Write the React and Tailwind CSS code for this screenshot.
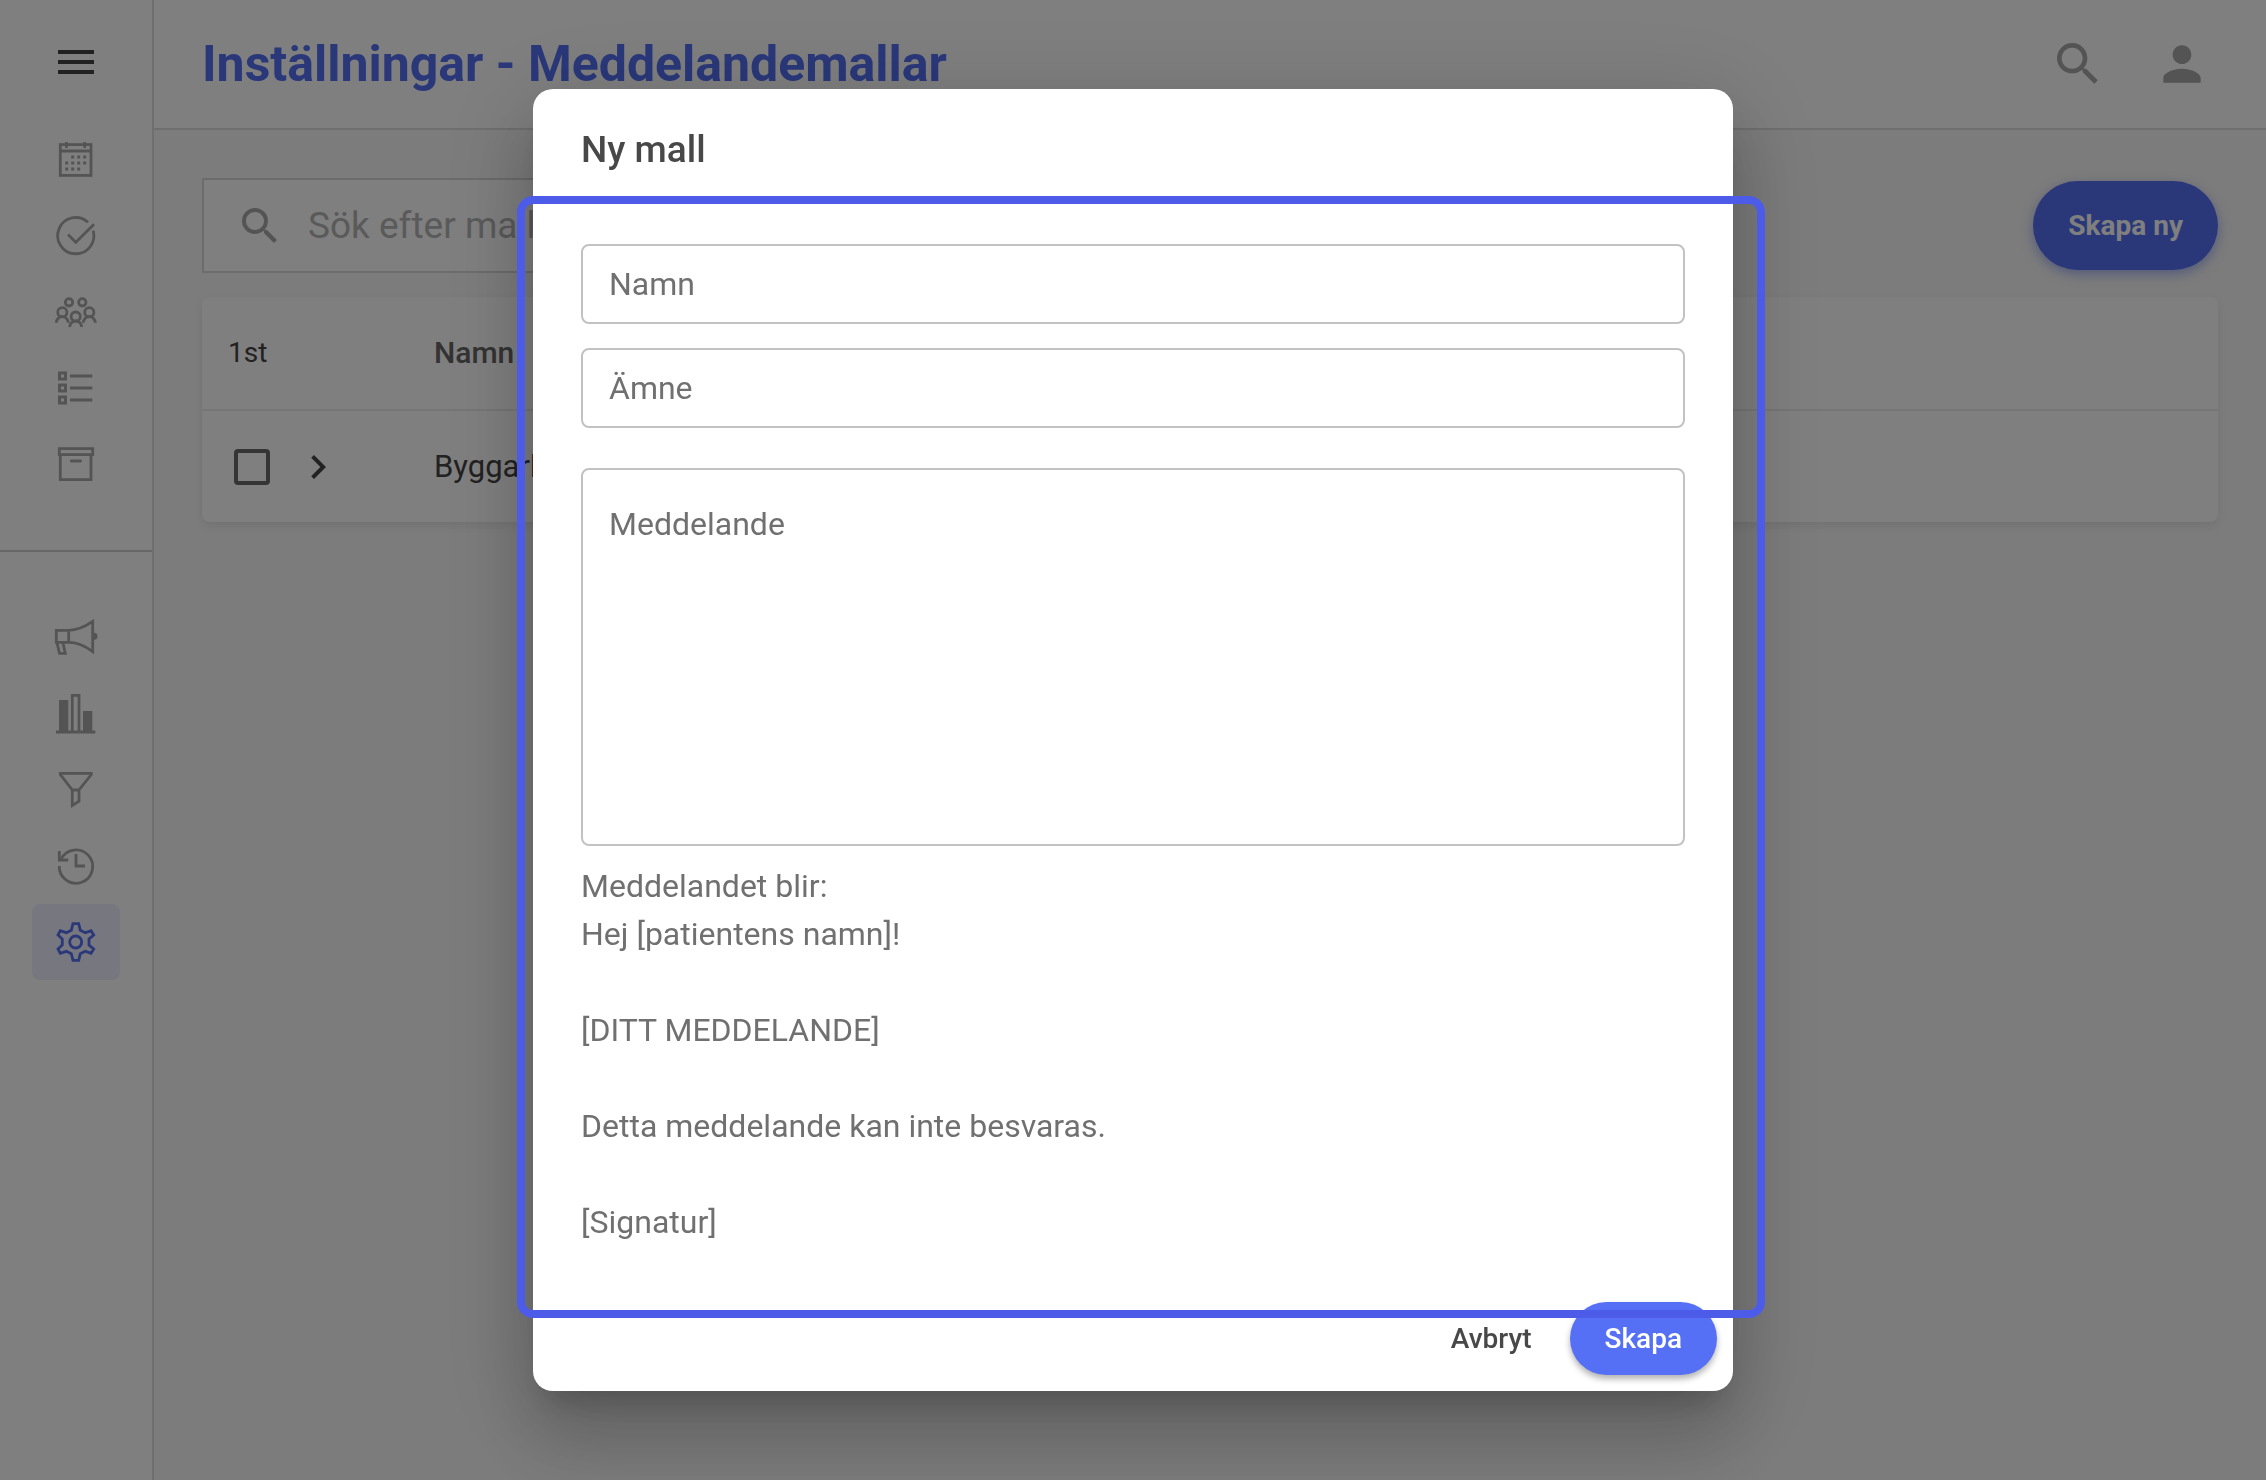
import { MdChevronRight, MdMenu, MdPerson, MdSearch } from 'react-icons/md';

function Icon({ children }) {
  return (
    <svg
      viewBox="0 0 48 48"
      className="size-12"
      fill="none"
      stroke="currentColor"
      strokeWidth="2.8"
      aria-hidden="true"
    >
      {children}
    </svg>
  );
}

const calendarDots = [
  [20.7, 21], [26.7, 21], [32.7, 21],
  [14.7, 27], [20.7, 27], [26.7, 27], [32.7, 27],
  [14.7, 33], [20.7, 33], [26.7, 33],
];

function CalendarIcon() {
  return (
    <Icon>
      <rect x="8.3" y="8.6" width="30.7" height="30.8" />
      <path d="M8 15H39M14.5 6V12M32.7 6V12" />
      {calendarDots.map(([x, y]) => (
        <rect key={`${x}-${y}`} x={x - 1.5} y={y - 1.5} width="3" height="3" fill="currentColor" stroke="none" />
      ))}
    </Icon>
  );
}

function TaskIcon() {
  return (
    <Icon>
      <path d="M36 10.3A18.1 18.1 0 1 0 41.2 18.7" />
      <path d="M16 22.4L23.8 30.2L42 12.2" />
    </Icon>
  );
}

function PeopleIcon() {
  return (
    <Icon>
      <circle cx="17" cy="14.3" r="3.7" />
      <circle cx="30.3" cy="14.3" r="3.7" />
      <circle cx="10.3" cy="24.3" r="4.6" />
      <circle cx="37.3" cy="24.3" r="4.6" />
      <circle cx="23.7" cy="28.6" r="4.6" />
      <path d="M4.3 34.7a6 6 0 0 1 12 0M31.3 34.7a6 6 0 0 1 12 0M17.7 39a6 6 0 0 1 12 0" />
    </Icon>
  );
}

function ListIcon() {
  return (
    <Icon>
      <path d="M7.5 9h6v6h-6zM7.5 21h6v6h-6zM7.5 33h6v6h-6z" strokeWidth="3" />
      <path d="M18 12H40.3M18 24H40.3M18 36H40.3" />
    </Icon>
  );
}

function ArchiveIcon() {
  return (
    <Icon>
      <path d="M7.3 8.6H40.7V14.7H7.3zM8.3 15V39.7H39V15" />
      <path d="M19.3 21H28.6" strokeLinecap="round" />
    </Icon>
  );
}

function MegaphoneIcon() {
  return (
    <Icon>
      <path d="M16.7 16.3H4.3V28.3H16.7zM16.7 16.3C26 16.3 34 12 40.7 7.4V37.6C34 32.4 26 28.3 16.7 28.3" />
      <path d="M5 29L7.5 39.3H13.3L11 29" />
      <path d="M42 18.8a3.4 3.4 0 0 1 0 7z" fill="currentColor" stroke="none" />
    </Icon>
  );
}

function ChartIcon() {
  return (
    <Icon>
      <path d="M7 10H16.3V41H7zM31 21H40.3V41H31z" fill="currentColor" stroke="none" />
      <path d="M20.3 42V5.3H27V42" />
      <path d="M4 42H43.3" strokeWidth="3" />
    </Icon>
  );
}

function FilterIcon() {
  return (
    <Icon>
      <path d="M8.3 7.3H39.3V8.6L27 24V35.3L20.3 39.4V24L8.3 8.6ZM20.3 24H27" />
    </Icon>
  );
}

function HistoryIcon() {
  return (
    <Icon>
      <path d="M7.3 24A16.7 16.7 0 1 0 9 17.2" />
      <path d="M7.3 9V18H16.3M24 12V24H33" />
    </Icon>
  );
}

function GearIcon() {
  return (
    <Icon>
      <circle cx="23.7" cy="24" r="6" />
      <path d="M21 5.7H26.7L28.3 12.3L33.3 14.7L39 12.7L41.7 17L37 21V27L41.7 31L39 35.3L33.3 33.3L28.3 35.7L26.7 42.3H21L19.3 35.7L14.3 33.3L8.3 35.3L6 31L10.3 27V21L6 17L8.3 12.7L14.3 14.7L19.3 12.3Z" />
    </Icon>
  );
}

const primaryNav = [
  { label: 'Kalender', icon: CalendarIcon },
  { label: 'Uppgifter', icon: TaskIcon },
  { label: 'Patienter', icon: PeopleIcon },
  { label: 'Listor', icon: ListIcon },
  { label: 'Arkiv', icon: ArchiveIcon },
];

const secondaryNav = [
  { label: 'Utskick', icon: MegaphoneIcon },
  { label: 'Statistik', icon: ChartIcon },
  { label: 'Filter', icon: FilterIcon },
  { label: 'Historik', icon: HistoryIcon },
  { label: 'Inställningar', icon: GearIcon, active: true },
];

function NavGroup({ items }) {
  return (
    <ul className="flex flex-col items-center">
      {items.map((item) => (
        <li key={item.label}>
          <a
            href="#"
            aria-label={item.label}
            className={
              item.active
                ? 'flex h-[76px] w-[88px] items-center justify-center rounded-lg bg-[#5570f5]/10 text-[#5570f5]'
                : 'flex h-[76px] w-[88px] items-center justify-center rounded-lg text-[#a8a8a8]'
            }
          >
            <item.icon />
          </a>
        </li>
      ))}
    </ul>
  );
}

function Sidebar() {
  return (
    <nav className="w-[154px] shrink-0 border-r-2 border-[#dedede] bg-white">
      <div className="flex h-[122px] justify-center pt-[38px]">
        <button type="button" aria-label="Meny" className="size-12 text-[#444444]">
          <MdMenu className="size-12" />
        </button>
      </div>
      <NavGroup items={primaryNav} />
      <hr className="my-12 border-t-2 border-[#cecece]" />
      <NavGroup items={secondaryNav} />
    </nav>
  );
}

function Header() {
  return (
    <header className="flex h-[130px] items-center justify-between border-b-2 border-[#dedede] bg-white pr-14 pl-12">
      <h1 className="text-[50px] leading-[64px] font-bold text-[#5570f5]">
        Inställningar - Meddelandemallar
      </h1>
      <div className="flex gap-12 text-[#a8a8a8]">
        <button type="button" aria-label="Sök">
          <MdSearch className="size-14" />
        </button>
        <button type="button" aria-label="Konto">
          <MdPerson className="size-14" />
        </button>
      </div>
    </header>
  );
}

function TemplateTable() {
  return (
    <div className="mt-6 rounded-lg bg-white shadow-[0_4px_8px_rgba(0,0,0,0.08)]">
      <table className="w-full table-fixed border-collapse text-left text-[31px] leading-9 text-[#444444]">
        <thead>
          <tr className="h-[113px] border-b-2 border-[#ececec]">
            <th className="w-[232px] pl-[26px] text-[28px] font-normal">1st</th>
            <th className="text-[30px] font-medium text-[#666666]">Namn</th>
          </tr>
        </thead>
        <tbody>
          <tr className="h-[112px]">
            <td className="pl-8">
              <div className="flex items-center gap-6">
                <input
                  type="checkbox"
                  aria-label="Välj Byggarbete"
                  className="size-9 appearance-none rounded border-4 border-[#6b6b6b]"
                />
                <button type="button" aria-label="Visa mer">
                  <MdChevronRight className="size-12" />
                </button>
              </div>
            </td>
            <td>Byggarbete</td>
          </tr>
        </tbody>
      </table>
    </div>
  );
}

function NewTemplateDialog() {
  return (
    <div className="fixed inset-0 flex items-center justify-center bg-black/50">
      <div
        role="dialog"
        aria-modal="true"
        aria-labelledby="dialog-title"
        className="relative w-full max-w-[1200px] rounded-[20px] bg-white shadow-[0_22px_30px_-14px_rgba(0,0,0,0.2),0_48px_76px_6px_rgba(0,0,0,0.14),0_18px_92px_16px_rgba(0,0,0,0.12)]"
      >
        <h2 id="dialog-title" className="px-12 pt-[37px] pb-[23px] text-[37px] leading-[48px] font-medium text-[#484848]">
          Ny mall
        </h2>

        <form id="template-form" className="px-12 pt-[47px] pb-10 text-[32px] leading-[48px] text-[#707070]">
          <input
            type="text"
            aria-label="Namn"
            placeholder="Namn"
            className="block h-20 w-full rounded-lg border-2 border-[#c2c2c2] px-[26px] placeholder:text-[#707070]"
          />
          <input
            type="text"
            aria-label="Ämne"
            placeholder="Ämne"
            className="mt-6 block h-20 w-full rounded-lg border-2 border-[#c2c2c2] px-[26px] placeholder:text-[#707070]"
          />
          <textarea
            aria-label="Meddelande"
            placeholder="Meddelande"
            className="mt-10 block h-[378px] w-full resize-none rounded-lg border-2 border-[#c2c2c2] px-[26px] py-[30px] placeholder:text-[#707070]"
          />
          <p className="mt-4 whitespace-pre-line">
            {'Meddelandet blir:\nHej [patientens namn]!\n\n[DITT MEDDELANDE]\n\nDetta meddelande kan inte besvaras.\n\n[Signatur]'}
          </p>
        </form>

        <div className="flex justify-end gap-1.5 p-4 text-[28px] font-medium">
          <button type="button" className="h-[73px] px-8 text-[#484848]">
            Avbryt
          </button>
          <button
            type="submit"
            form="template-form"
            className="h-[73px] rounded-full bg-[#5570f5] px-[35px] text-white shadow-[0_4px_6px_rgba(0,0,0,0.3)]"
          >
            Skapa
          </button>
        </div>

        {/* Highlight around the form */}
        <div className="pointer-events-none absolute top-[107px] -right-8 bottom-[73px] -left-4 rounded-2xl border-8 border-[#4d5be9]" />
      </div>
    </div>
  );
}

export default function App() {
  return (
    <div className="flex min-h-screen bg-[#f8f8f8] font-[Roboto,sans-serif]">
      <Sidebar />
      <div className="min-w-0 flex-1">
        <Header />
        <main className="p-12">
          <div className="flex items-center justify-between">
            <label className="flex h-[95px] w-1/2 items-center gap-6 border-2 border-[#d8d8d8] bg-white px-8">
              <MdSearch className="size-12 shrink-0 text-[#a8a8a8]" />
              <input
                type="search"
                aria-label="Sök efter mall"
                placeholder="Sök efter mall"
                className="min-w-0 flex-1 text-[37px] placeholder:text-[#b4b4b4]"
              />
            </label>
            <button
              type="button"
              className="h-[89px] rounded-full bg-[#5570f5] px-[35px] text-[28px] font-bold text-white shadow-[0_4px_12px_rgba(85,112,245,0.5)]"
            >
              Skapa ny
            </button>
          </div>
          <TemplateTable />
        </main>
      </div>
      <NewTemplateDialog />
    </div>
  );
}
